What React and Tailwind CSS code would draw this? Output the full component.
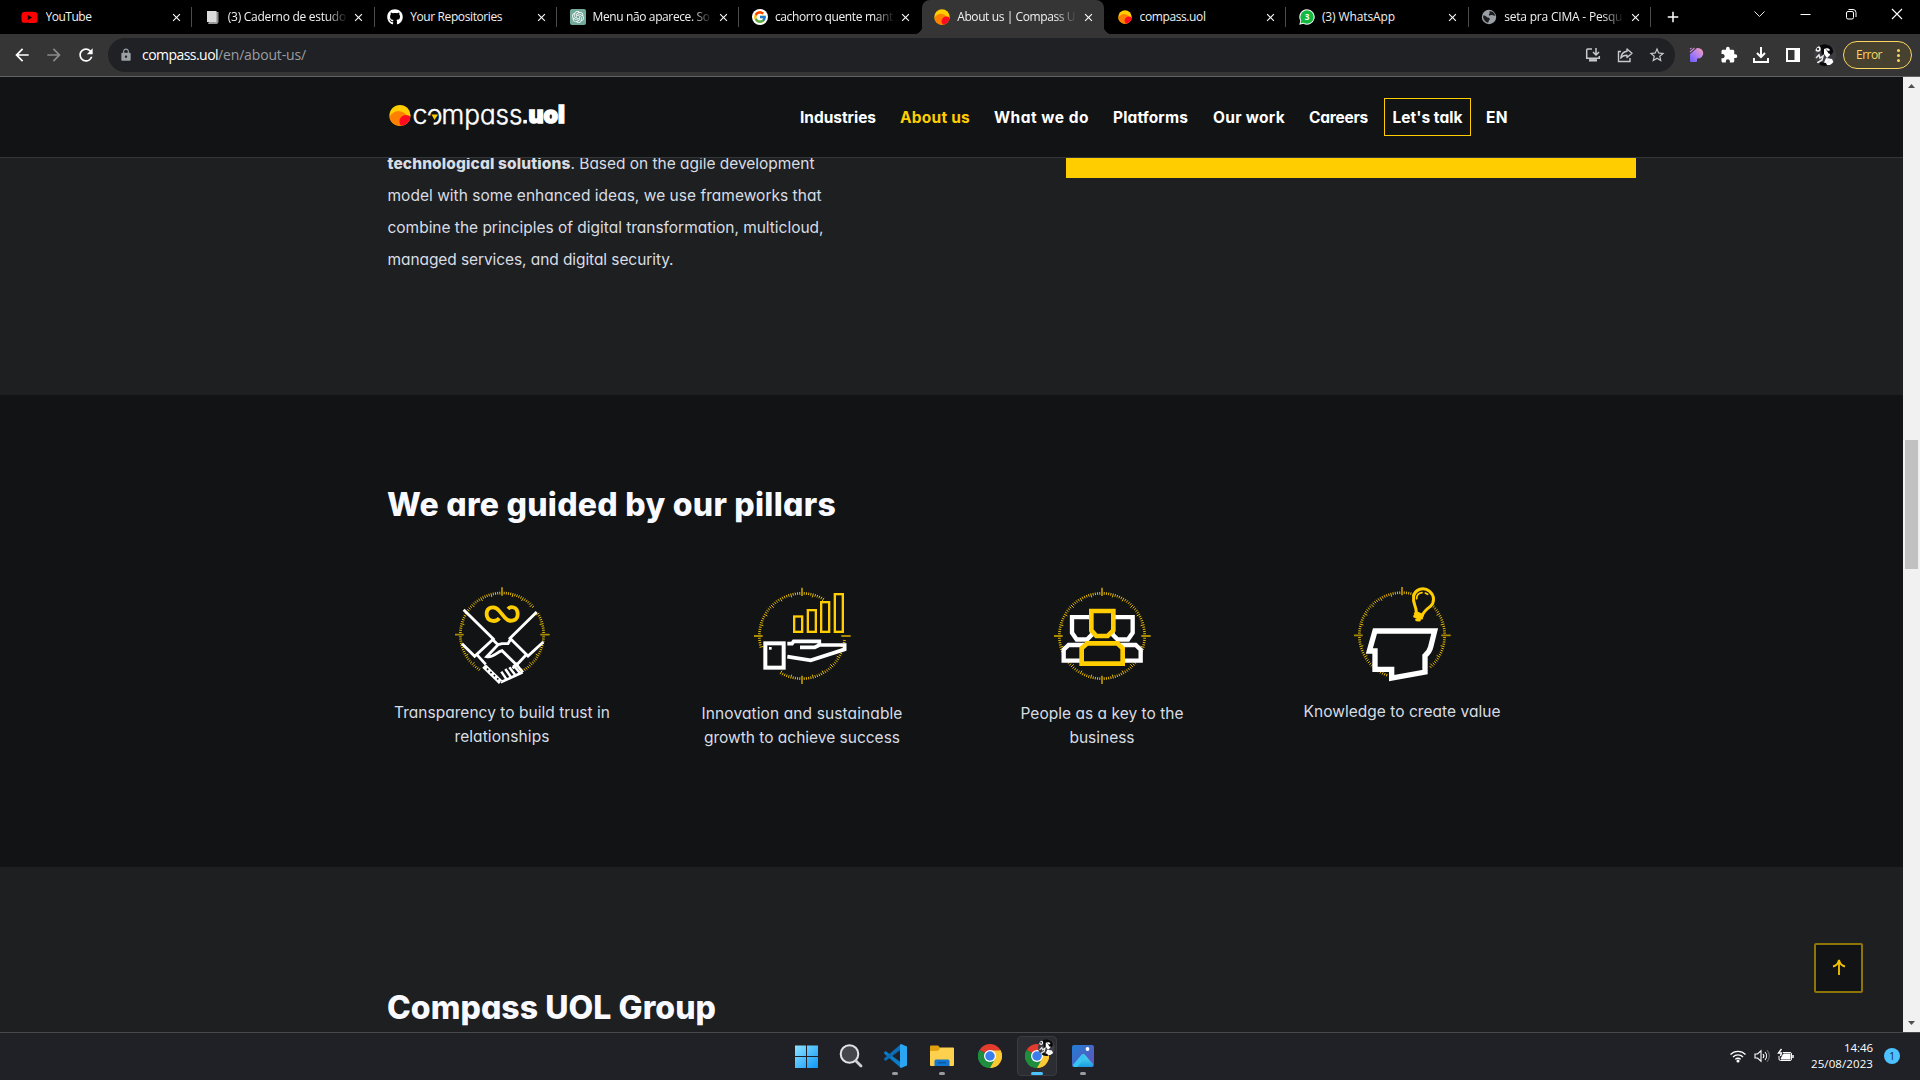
import React, { useLayoutEffect, useRef } from "react";
import { FaYoutube, FaGithub } from "react-icons/fa";
import { FcGoogle } from "react-icons/fc";
import { SiOpenai } from "react-icons/si";
import {
  MdArrowBack,
  MdArrowForward,
  MdRefresh,
  MdLock,
  MdStarBorder,
  MdExtension,
  MdAdd,
  MdClose,
} from "react-icons/md";

/* A single line of text tracked so that it fills a given width. */
function Fit({ w, className = "", children }) {
  const ref = useRef(null);
  useLayoutEffect(() => {
    const el = ref.current;
    const n = el.textContent.length;
    el.style.letterSpacing = "0px";
    const natural = el.getBoundingClientRect().width;
    el.style.letterSpacing = `${(w - natural) / n}px`;
  }, [w, children]);
  return (
    <span ref={ref} className={`inline-block whitespace-pre ${className}`}>
      {children}
    </span>
  );
}

function CompassMark({ className }) {
  return (
    <svg viewBox="0 0 22 22" className={className}>
      <defs>
        <clipPath id="ball"><circle cx="11" cy="11" r="10.6" /></clipPath>
      </defs>
      <g clipPath="url(#ball)">
        <rect width="22" height="22" fill="#ffcd00" />
        <circle cx="9.5" cy="16" r="9.6" fill="#ff8000" />
        <circle cx="17" cy="17" r="6.6" fill="#ff0a1e" />
      </g>
    </svg>
  );
}

const Notebook = () => (
  <svg viewBox="0 0 16 16" className="size-4">
    <path d="M4 3h9.500v10.500l-2 1H4z" fill="#8d8d8d" />
    <rect x="2" y="2" width="9.500" height="11" fill="#dcdcdc" />
    <path d="M3 14.200h9.500" stroke="#bbb" />
  </svg>
);

const WhatsApp = () => (
  <svg viewBox="0 0 16 16" className="size-4">
    <path d="M8 .3a7.700 7.700 0 1 1-3.600 14.500L.3 15.800l1-4A7.700 7.700 0 0 1 8 .3z" fill="#fff" />
    <circle cx="8" cy="8" r="6.700" fill="#12b83f" />
    <path d="M1.500 14.500l.8-3.500 2.500 2.600z" fill="#12b83f" />
    <text x="8" y="11" textAnchor="middle" fontSize="8" fontWeight="700" fill="#fff" fontFamily="Open Sans, sans-serif">3</text>
  </svg>
);

const Globe = () => (
  <svg viewBox="0 0 16 16" className="size-4">
    <circle cx="8" cy="8" r="7.200" fill="#9aa0a6" />
    <path d="M2.200 6.500c2 0 3 .6 3.800 1.800 1.200.4 2.800.3 2.800 1.700 0 1.200-1.500 1.500-1.500 3.700-3-.4-5.600-3.500-5.100-7.200zM8.500 2l3 .8c1.500 1 2.300 2 2.500 3.700-1.600.6-2.200-.6-3.500-.5-1 .1-1.700 1-2.500.4-.7-.6.5-1.500.7-2.300z" fill="#1c1d1f" />
  </svg>
);

const tabs = [
  { icon: <FaYoutube className="-ml-[3px] size-[17px] shrink-0 text-[#f00]" />, title: "YouTube", w: 46 },
  { icon: <Notebook />, title: "(3) Caderno de estudo", w: 118, fade: true },
  { icon: <FaGithub className="size-4 text-white" />, title: "Your Repositories", w: 92 },
  {
    icon: (
      <span className="flex size-4 items-center justify-center rounded-[2px] bg-[#74aa9c]">
        <SiOpenai className="size-3 text-white" />
      </span>
    ),
    title: "Menu não aparece. So",
    w: 117,
    fade: true,
  },
  {
    icon: (
      <span className="flex size-4 items-center justify-center rounded-full bg-white">
        <FcGoogle className="size-[14px]" />
      </span>
    ),
    title: "cachorro quente mant",
    w: 118,
    fade: true,
  },
  { icon: <CompassMark className="size-4" />, title: "About us | Compass U", w: 118, fade: true, active: true },
  { icon: <CompassMark className="size-[14px]" />, title: "compass.uol", w: 66 },
  { icon: <WhatsApp />, title: "(3) WhatsApp", w: 73 },
  { icon: <Globe />, title: "seta pra CIMA - Pesqu", w: 118, fade: true },
];

function Tab({ tab, line }) {
  return (
    <div
      className={`relative flex h-[34px] w-[182.35px] shrink-0 items-center pl-3 ${
        tab.active ? "rounded-t-lg bg-[#353535]" : ""
      }`}
    >
      {tab.active && (
        <>
          <span className="absolute -left-2 bottom-0 size-2 bg-[radial-gradient(circle_at_0_0,transparent_8px,#353535_8.5px)]" />
          <span className="absolute -right-2 bottom-0 size-2 bg-[radial-gradient(circle_at_100%_0,transparent_8px,#353535_8.5px)]" />
        </>
      )}
      <span className="flex w-[17px] justify-center">{tab.icon}</span>
      <span
        className={`ml-[6.5px] w-[120px] overflow-hidden text-[12px] leading-4 text-[#f1f1f1] ${
          tab.fade ? "[mask-image:linear-gradient(to_right,#000_82%,transparent)]" : ""
        }`}
      >
        <Fit w={tab.w}>{tab.title}</Fit>
      </span>
      <MdClose className="ml-[4.5px] size-[13px] text-white" />
      {line && <span className="absolute right-0 top-[7px] h-5 w-px bg-[#4c4c4c]" />}
    </div>
  );
}

function TabStrip() {
  return (
    <div className="flex h-[34px] bg-black pl-[10px]">
      {tabs.map((t, i) => (
        <Tab key={t.title} tab={t} line={i !== 4 && i !== 5} />
      ))}
      <MdAdd className="ml-[13px] mt-[8px] size-[18px] text-white" />
      <div className="ml-auto flex h-[28px] items-center">
        <svg viewBox="0 0 46 28" className="h-7 w-[46px]" fill="none" stroke="#e8e8e8"><path d="M18.500 11.500l5 5 5-5" /></svg>
        <svg viewBox="0 0 46 28" className="h-7 w-[46px]" fill="none" stroke="#fff"><path d="M18.500 14.500h10" /></svg>
        <svg viewBox="0 0 46 28" className="h-7 w-[46px]" fill="none" stroke="#fff">
          <rect x="18.500" y="11.500" width="7" height="7.500" rx="1.500" />
          <path d="M20.500 9.500h4.500a3 3 0 0 1 3 3v4.500" />
        </svg>
        <svg viewBox="0 0 46 28" className="h-7 w-[46px]" fill="none" stroke="#fff" strokeWidth="1.100"><path d="M18 9l10 10M28 9L18 19" /></svg>
      </div>
    </div>
  );
}

function Avatar({ className }) {
  return (
    <svg viewBox="0 0 22 22" className={className}>
      <defs><clipPath id="av"><circle cx="11" cy="11" r="11" /></clipPath></defs>
      <g clipPath="url(#av)">
        <rect width="22" height="22" fill="#3d3d44" />
        <path d="M6 1c5-2 12 0 13 5 1 3-1 3-2 5l-5-2-4 2z" fill="#08080a" />
        <path d="M10 5c2-1 5-1 6 1v5l-3 3-3-4z" fill="#fff" />
        <path d="M11 4l3 3 3-1v3l-2 1" fill="#08080a" />
        <path d="M12 14l6 1 3 6H9z" fill="#fff" />
        <path d="M6 18l6 1 2 4H5z" fill="#0a0a0c" />
        <circle cx="4" cy="5" r="2" fill="none" stroke="#fff" strokeWidth="1.400" />
        <path d="M2 14l3-3 1 3 3-2-1 4-5 3M16 16l-3 3" stroke="#e9e9e9" strokeWidth="1.500" fill="none" />
      </g>
    </svg>
  );
}

function Toolbar() {
  return (
    <div className="flex h-[43px] items-center border-b border-[#636363] bg-[#353535] pl-[12px]">
      <MdArrowBack className="size-[20px] text-white" />
      <MdArrowForward className="ml-[12px] size-[20px] text-[#8b8b8b]" />
      <MdRefresh className="ml-[12px] size-[20px] text-white" />
      <div className="ml-[12px] flex h-[34px] w-[1567px] items-center rounded-full bg-[#202124] pl-[11px] pr-[9px]">
        <MdLock className="size-[14px] text-[#9aa0a6]" />
        <div className="ml-[9px] flex text-[14px] leading-5">
          <Fit w={76} className="text-white">compass.uol</Fit>
          <Fit w={88} className="text-[#9a9da1]">/en/about-us/</Fit>
        </div>
        <div className="ml-auto flex items-center gap-[14px] text-[#c7c9cc]">
          <svg viewBox="0 0 18 18" className="size-[18px]" fill="none" stroke="currentColor" strokeWidth="1.500">
            <path d="M8 3H3.700a1 1 0 0 0-1 1v8.200h12.600V10" />
            <path d="M5 14.300h8" strokeWidth="2.400" />
            <path d="M12 2v6.500M9 6l3 3 3-3" />
          </svg>
          <svg viewBox="0 0 18 18" className="size-[18px]" fill="none" stroke="currentColor" strokeWidth="1.400">
            <path d="M5 5.500H2.500v10h11.500V12" />
            <path d="M11 3l5 4.300-5 4.200V9.200c-3 0-5 .8-6.200 3 .3-3.600 2.500-6.400 6.200-6.900z" strokeLinejoin="round" />
          </svg>
          <MdStarBorder className="size-[18px]" />
        </div>
      </div>
      <svg viewBox="0 0 16 18" className="ml-[14px] h-[18px] w-4">
        <defs><linearGradient id="pg" x1="1" y1="0" x2="0" y2="1"><stop offset="0" stopColor="#ff9fb0" /><stop offset=".5" stopColor="#b180f0" /><stop offset="1" stopColor="#6a5cff" /></linearGradient></defs>
        <path d="M1 8L8 2h1a5 5 0 0 1 0 10.500H8V15a1 1 0 0 1-1 1H2a1 1 0 0 1-1-1z" fill="url(#pg)" />
        <path d="M1 6l4.500-4M1 3.200l1.500-1.300" stroke="#d58be0" strokeWidth="1.100" />
      </svg>
      <MdExtension className="ml-[15px] size-[18px] text-white" />
      <svg viewBox="0 0 18 18" className="ml-[14px] size-[18px]" fill="none" stroke="#fff" strokeWidth="2">
        <path d="M9 1v9.500M5 7l4 4 4-4M2 12v4h14v-4" />
      </svg>
      <svg viewBox="0 0 18 18" className="ml-[14px] size-[18px]">
        <path d="M2 2h14v14H2z M4 4v10h6.500V4z" fill="#fff" fillRule="evenodd" />
      </svg>
      <Avatar className="ml-[12px] size-[22px]" />
      <div className="ml-[7px] flex h-7 w-[69px] items-center rounded-full border border-[#fdd663] bg-[#47412f] pl-3 text-[12px] text-[#fdd663]">
        <Fit w={26}>Error</Fit>
        <span className="ml-[15px] flex flex-col gap-[2px]">
          <i className="size-[3px] rounded-full bg-[#fdd663]" />
          <i className="size-[3px] rounded-full bg-[#fdd663]" />
          <i className="size-[3px] rounded-full bg-[#fdd663]" />
        </span>
      </div>
    </div>
  );
}

function Logo() {
  return (
    <svg viewBox="0 0 178 36" className="h-9 w-[178px]">
      <svg x="1" y="5.500" width="22" height="22"><CompassMark /></svg>
      <text y="24.500" fontFamily="Inter, sans-serif" fontSize="26" fill="#fff" fontWeight="300" stroke="#fff" strokeWidth=".45" className="[font-feature-settings:'cv11']">
        <tspan x="24.500" textLength="15" lengthAdjust="spacingAndGlyphs">c</tspan>
        <tspan x="38.500" textLength="16" lengthAdjust="spacingAndGlyphs">o</tspan>
        <tspan x="53.500" textLength="81" lengthAdjust="spacingAndGlyphs">mpass</tspan>
      </text>
      <path d="M46.500 17.500l-8-1.500v10h7z" fill="#111315" />
      <path d="M43.500 15.500l6.500 0-3.500 5.500z" fill="#ffcd00" />
      <rect x="135.300" y="20.900" width="3.600" height="3.600" fill="#fff" />
      <text x="140.500" y="24" textLength="36.500" lengthAdjust="spacingAndGlyphs" fontFamily="Inter, sans-serif" fontWeight="900" fontSize="24" fill="#fff" stroke="#fff" strokeWidth="1.400">uol</text>
    </svg>
  );
}

function SiteHeader() {
  return (
    <header className="flex h-[81px] items-center border-b border-[#34373a] bg-[#111315] pl-[388px]">
      <Logo />
      <nav className="ml-[234px] flex items-center font-[Inter] text-[15.5px] font-bold text-white [font-feature-settings:'cv11'] *:pt-[2px]">
        <Fit w={76}>Industries</Fit>
        <Fit w={70} className="ml-[24px] text-[#ffcd00]">About us</Fit>
        <Fit w={95} className="ml-[24px]">What we do</Fit>
        <Fit w={75} className="ml-[24px]">Platforms</Fit>
        <Fit w={72} className="ml-[25px]">Our work</Fit>
        <Fit w={59} className="ml-[24px]">Careers</Fit>
        <span className="ml-[16px] flex h-[38px] w-[87px] items-center justify-center border border-[#ffcd00]">
          <Fit w={70}>Let's talk</Fit>
        </span>
        <Fit w={22} className="ml-[15px]">EN</Fit>
      </nav>
    </header>
  );
}

/* Dashed compass dial; each arc is [from, to] in degrees, clockwise from the top. */
function Dial({ arcs = [[0, 359.9]], ticks = ["n", "e", "s", "w"], cy = 183, r = 128 }) {
  const pt = (deg, rad) => {
    const a = ((deg - 90) * Math.PI) / 180;
    return [186 + rad * Math.cos(a), cy + rad * Math.sin(a)];
  };
  const inArc = (d) => arcs.some(([a, b]) => d >= a && d <= b);
  const fine = [];
  for (let d = 3; d < 360; d += 3) {
    if (!inArc(d) || d % 90 === 0) continue;
    const [x1, y1] = pt(d, r + 4);
    const [x2, y2] = pt(d, d % 15 === 0 ? r - 8 : r - 4);
    fine.push(`M${x1} ${y1}L${x2} ${y2}`);
  }
  const cross = {
    n: `M186 ${cy - r - 17}v25`,
    s: `M186 ${cy + r - 9}v25`,
    w: `M${186 - r - 16} ${cy}h26`,
    e: `M${186 + r - 10} ${cy}h28`,
  };
  return (
    <g fill="none">
      <path d={fine.join("")} stroke="#e6ba00" strokeWidth="3" />
      <path d={ticks.map((t) => cross[t]).join("")} stroke="#ab8a02" strokeWidth="5.500" />
    </g>
  );
}

const Handshake = () => (
  <>
    <Dial cy={179} r={125} arcs={[[0, 50], [60, 150], [212, 260], [260, 359]]} ticks={["n", "e", "w"]} />
    <path d="M204 102c8-9 28-8 29 14 1 22-24 28-38 12l-18-21c-13-17-38-11-37 11 1 21 26 26 38 12" fill="none" stroke="#ffcd00" strokeWidth="11.500" />
    <g fill="none" stroke="#fff" strokeWidth="8.500">
      <path d="M71 104L160 192 104 244 66 206" />
      <path d="M290 111L210 190 264 243 310 201" />
      <path d="M156 192l18 17 12-3h18l8-14M174 209l-34 36c20 5 30-14 46-18l44 43 28-30" />
      <path d="M110 238l27 30M228 268l-10 12" />
      <path d="M248 292L182 322M226 264l22 28" strokeWidth="8" />
      <path d="M132 273l50 49" strokeWidth="15" />
      <path d="M184 290l16 24M196 282l18 26M208 277l20 26M220 270l22 27" strokeWidth="7.500" />
    </g>
    <path d="M141 281l42 40" stroke="#111315" strokeWidth="5" strokeDasharray="5 9" />
  </>
);

const Growth = () => (
  <>
    <Dial arcs={[[0, 30], [95, 210], [255, 359]]} />
    <g fill="#111315" stroke="#ffcd00" strokeWidth="7">
      <rect x="162.500" y="124.500" width="24" height="46" />
      <rect x="203.500" y="105.500" width="24" height="65" />
      <rect x="243.500" y="81.500" width="24" height="89" />
      <rect x="284.500" y="57.500" width="24" height="113" />
    </g>
    <rect x="76" y="205" width="55" height="73" fill="#111315" stroke="#fff" strokeWidth="12" />
    <rect x="87" y="216" width="8" height="8" fill="#fff" />
    <path d="M142 206h14l5-7h77v11l-14 7h-44M238 210h76v13l-102 33-70-11" fill="none" stroke="#fff" strokeWidth="11" />
  </>
);

const People = () => (
  <>
    <Dial />
    <g fill="#111315" stroke="#fff" strokeWidth="13">
      <path d="M96 126.500h60v52l-15 15h-31l-14-20z" />
      <path d="M278 126.500h-60v52l15 15h31l14-20z" />
      <path d="M71 257v-33l15-14h50v47z" />
      <path d="M302 257v-33l-15-14h-50v47z" />
    </g>
    <g fill="#111315" stroke="#ffcd00" strokeWidth="14">
      <path d="M154 108h66v58l-17 17h-34l-15-17z" />
      <path d="M125 266v-46l17-15h90l16 15v46z" />
    </g>
  </>
);

const Knowledge = () => (
  <>
    <Dial cy={181} arcs={[[0, 18], [46, 140], [200, 359]]} ticks={["n", "e", "w"]} />
    <path d="M105 168h179l-12 48q-3 14-17 26v49l-100 18v-26h-50v-55H88z" fill="#111315" stroke="#fff" strokeWidth="16" />
    <g fill="none" stroke="#ffcd00" strokeLinecap="round">
      <path d="M229 113c0-22-12-26-8-49 4-22 30-30 48-15 15 13 15 34 2 45-16 12-20 16-24 27z" fill="#111315" strokeWidth="9" />
      <path d="M226 116l21 5M224 124l21 5M230 134l8 1" strokeWidth="9" />
      <path d="M230 71c0-10 7-17 16-18M256 54l7 4" strokeWidth="5" />
    </g>
  </>
);

const pillars = [
  { Icon: Handshake, pad: "pt-[6px]", lines: [["Transparency to build trust in", 216], ["relationships", 95]] },
  { Icon: Growth, pad: "pt-[7px]", lines: [["Innovation and sustainable", 201], ["growth to achieve success", 196]] },
  { Icon: People, pad: "pt-[7px]", lines: [["People as a key to the", 163], ["business", 65]] },
  { Icon: Knowledge, pad: "pt-[5px]", lines: [["Knowledge to create value", 197]] },
];

function Page() {
  return (
    <main className="h-[874px] overflow-hidden bg-[#1e1f21] font-[Inter] [font-feature-settings:'cv11']">
      <section className="flex h-[237px] items-start pl-[387.5px]">
        <p className="-mt-[10px] w-[440px] text-[15.5px] leading-8 text-[#d8dde4]">
          <Fit w={183} className="font-extrabold">technological solutions</Fit>
          <Fit w={244}>. Based on the agile development</Fit>
          <br />
          <Fit w={434}>model with some enhanced ideas, we use frameworks that</Fit>
          <br />
          <Fit w={436}>combine the principles of digital transformation, multicloud,</Fit>
          <br />
          <Fit w={286}>managed services, and digital security.</Fit>
        </p>
        <div className="ml-[238.5px] h-5 w-[570px] bg-[#ffcd00]" />
      </section>

      <section className="h-[472px] bg-[#111315] pt-[86px]">
        <h2 className="pl-[387px] text-[32px] font-extrabold leading-[48px] text-[#f8faff]">
          <Fit w={449}>We are guided by our pillars</Fit>
        </h2>
        <div className="ml-[352px] grid w-[1200px] grid-cols-4 pt-[46px]">
          {pillars.map(({ Icon, lines, pad }) => (
            <div key={lines[0][0]} className="flex flex-col items-center">
              <svg viewBox="0 0 390 360" className="ml-[6px] h-[120px] w-[130px]"><Icon /></svg>
              <p className={`${pad} flex flex-col items-center text-[15.5px] leading-6 text-[#d8dde4]`}>
                {lines.map(([t, w]) => <Fit key={t} w={w}>{t}</Fit>)}
              </p>
            </div>
          ))}
        </div>
      </section>

      <section className="pt-[117px]">
        <h2 className="pl-[387px] text-[32px] font-extrabold leading-[48px] text-[#f8faff]">
          <Fit w={329}>Compass UOL Group</Fit>
        </h2>
      </section>
    </main>
  );
}

function ScrollBar() {
  return (
    <div className="flex w-[17px] flex-col items-center bg-[#f1f1f1]">
      <svg viewBox="0 0 17 17" className="size-[17px]"><path d="M5 11l3.500-4 3.500 4z" fill="#505050" /></svg>
      <div className="mt-[346px] h-[129px] w-[13px] bg-[#c1c1c1]" />
      <svg viewBox="0 0 17 17" className="mt-auto size-[17px]"><path d="M5 6l3.500 4L12 6z" fill="#505050" /></svg>
    </div>
  );
}

const Chrome = ({ className }) => (
  <svg viewBox="0 0 48 48" className={className}>
    <path d="M24 24L3.200 12A24 24 0 0 1 44.800 12z" fill="#e33b2e" />
    <path d="M24 24L44.800 12A24 24 0 0 1 24 48z" fill="#fcc934" />
    <path d="M24 24v24A24 24 0 0 1 3.200 12z" fill="#1e8e3e" />
    <path d="M24 13h20.800a24 24 0 0 1-11 33L24 48l10-18z" fill="#fcc934" />
    <path d="M3.200 12l10.500 18L24 35l10-5-10 18A24 24 0 0 1 3.200 12z" fill="#1e8e3e" />
    <circle cx="24" cy="24" r="12" fill="#fff" />
    <circle cx="24" cy="24" r="9.500" fill="#3b7ded" />
  </svg>
);

const Slot = ({ className = "", dot, children }) => (
  <div className={`relative flex h-10 w-10 items-center justify-center ${className}`}>
    {children}
    {dot && <span className="absolute bottom-[1px] h-[3px] w-[6px] rounded-full bg-[#9a9aa0]" />}
  </div>
);

function Taskbar() {
  return (
    <footer className="flex h-12 border-t border-[#4a4a4c] bg-[#202127] pl-[786px]">
      <div className="flex pt-[3px]">
        <Slot>
          <svg viewBox="0 0 23 23" className="size-[23px]">
            <defs><linearGradient id="win" x2="1" y2="1"><stop stopColor="#8fe3ff" /><stop offset="1" stopColor="#0c97fb" /></linearGradient></defs>
            <path d="M0 .5h11V11H0zM12 .5h11V11H12zM0 12h11v11H0zM12 12h11v11H12z" fill="url(#win)" />
          </svg>
        </Slot>
        <Slot className="ml-[5px]">
          <svg viewBox="0 0 24 24" className="size-6" fill="none">
            <circle cx="10.500" cy="10" r="8.800" fill="#44464b" stroke="#e4e4e6" strokeWidth="2" />
            <path d="M17 17l5 5" stroke="#d0d0d4" strokeWidth="2.800" strokeLinecap="round" />
          </svg>
        </Slot>
        <Slot className="ml-[4px]" dot>
          <svg viewBox="0 0 24 24" className="size-6">
            <path d="M1 8.500L2.500 7 18 18.500V24L1.300 9.700z" fill="#0b7cc7" />
            <path d="M1 15.500L2.500 17 18 5.500V0L1.300 14.300z" fill="#0a6db5" />
            <path d="M18 0l6 2.500v19L18 24l-1-1V1z" fill="#2aa6f2" />
          </svg>
        </Slot>
        <Slot className="ml-[7px]" dot>
          <svg viewBox="0 0 24 24" className="size-6">
            <path d="M0 2.500A1 1 0 0 1 1 1.500h7l2.500 2.500H10V9H0z" fill="#e0a010" />
            <path d="M0 7l8-.3L10.500 3.500H23a1 1 0 0 1 1 1V21a1 1 0 0 1-1 1H1a1 1 0 0 1-1-1z" fill="#fdd04d" />
            <path d="M4.500 22v-5a1.500 1.500 0 0 1 1.500-1.500h12A1.500 1.500 0 0 1 19.500 17v5z" fill="#1377cf" />
            <path d="M8 18.700h8" stroke="#0a5aa8" strokeWidth="1.500" />
          </svg>
        </Slot>
        <Slot className="ml-[8px]"><Chrome className="size-6" /></Slot>
        <div className="relative ml-[7px] flex h-10 w-10 items-center justify-center rounded-[4px] border border-[#3a3b40] bg-[#2c2d32]">
          <Chrome className="size-6" />
          <Avatar className="absolute left-[20px] top-[2px] size-[17px]" />
          <span className="absolute bottom-0 h-[3px] w-3 rounded-full bg-[#4cc2ff]" />
        </div>
        <Slot className="ml-[6px]" dot>
          <svg viewBox="0 0 22 22" className="size-[22px]">
            <defs>
              <linearGradient id="ph" x2="1" y2="1"><stop stopColor="#1f7fd6" /><stop offset="1" stopColor="#6a4fb8" /></linearGradient>
              <linearGradient id="mt" x2="0" y2="1"><stop stopColor="#5ee0f5" /><stop offset="1" stopColor="#1a9be0" /></linearGradient>
            </defs>
            <rect width="22" height="22" rx="2" fill="url(#ph)" />
            <path d="M1 20L10 9.500q1.300-1.200 2.600 0L21 19v1q0 2-2 2H3q-2 0-2-2z" fill="url(#mt)" />
            <path d="M1 20l9-10.500q1-1 2 0L14 12 5 22H3q-2 0-2-2z" fill="#39c3f0" />
            <circle cx="15.500" cy="4" r="1.900" fill="#fff" />
          </svg>
        </Slot>
      </div>
      <div className="ml-auto flex items-center pb-px pr-5 text-[11.5px] text-white">
        <svg viewBox="0 0 18 16" className="h-4 w-[18px]" fill="none" stroke="#fff" strokeWidth="1.300">
          <path d="M1.500 6.500a10.500 10.500 0 0 1 15 0M4 9a7 7 0 0 1 10 0M6.300 11.400a3.800 3.800 0 0 1 5.400 0" />
          <circle cx="9" cy="13" r=".9" fill="#fff" />
        </svg>
        <svg viewBox="0 0 17 16" className="ml-[7px] h-4 w-[17px]" fill="none" stroke="#fff" strokeWidth="1.100">
          <path d="M1 6h2.500L7 2.800v10.400L3.500 10H1z" />
          <path d="M9 6a3 3 0 0 1 0 4M11 4a6 6 0 0 1 0 8" />
          <path d="M13 2.200a8.500 8.500 0 0 1 0 11.600" stroke="#66686c" />
        </svg>
        <svg viewBox="0 0 17 16" className="ml-[6px] h-4 w-[17px]" fill="none" stroke="#fff">
          <path d="M6 4.500h7a1.500 1.500 0 0 1 1.500 1.500v5a1.500 1.500 0 0 1-1.500 1.500H3.500A1.500 1.500 0 0 1 2 11V8" />
          <path d="M6.500 6H13v5H4l1-2z" fill="#fff" />
          <path d="M16 7v3" strokeWidth="1.500" />
          <path d="M4.500 1L1.500 5h3l-1 3" strokeWidth="1.400" />
        </svg>
        <div className="ml-[16px] flex w-[63px] flex-col items-end leading-4">
          <Fit w={29}>14:46</Fit>
          <Fit w={62}>25/08/2023</Fit>
        </div>
        <span className="ml-[11px] flex size-4 items-center justify-center rounded-full bg-[#4cc2ff] text-[10px] leading-none text-[#16242e]">1</span>
      </div>
    </footer>
  );
}

export default function App() {
  return (
    <div className="flex h-[1080px] w-[1920px] flex-col overflow-hidden bg-black font-['Open_Sans',sans-serif]">
      <TabStrip />
      <Toolbar />
      <div className="relative flex h-[955px]">
        <div className="w-[1903px]">
          <SiteHeader />
          <Page />
        </div>
        <ScrollBar />
        <button className="absolute right-[57px] top-[866px] flex h-[50px] w-[49px] items-center justify-center rounded-[2px] border-2 border-[#8f7408] bg-[#111315]">
          <svg viewBox="0 0 14 18" className="-mt-[2px] h-[18px] w-[14px]" fill="none" stroke="#f5c400" strokeWidth="1.800">
            <path d="M7 17V2M1 8.500c3.500-.8 5.200-3 6-6.500.8 3.500 2.500 5.700 6 6.500" />
          </svg>
        </button>
      </div>
      <Taskbar />
    </div>
  );
}
